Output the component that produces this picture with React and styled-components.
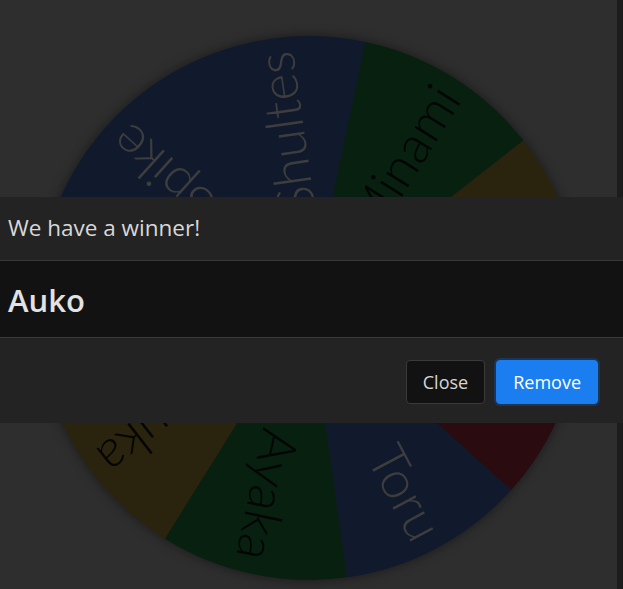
import React from 'react';
import styled, { createGlobalStyle } from 'styled-components';

const GlobalStyle = createGlobalStyle`
  html, body {
    margin: 0;
    padding: 0;
    height: 100%;
    overflow: hidden;
    background: #5c5c5c;
  }
  body {
    font-family: "Open Sans", "Noto Sans", sans-serif;
  }
`;

const Page = styled.div`
  display: flex;
  height: 100vh;
`;

const Stage = styled.main`
  flex: 1;
  display: flex;
  justify-content: center;
  padding-top: 36px;
`;

const Scrollbar = styled.div`
  width: 6px;
  background: #383838;
`;

const WheelSvg = styled.svg`
  display: block;
  filter: drop-shadow(0 0 6px rgba(0, 0, 0, 0.45));
`;

const Backdrop = styled.div`
  position: fixed;
  inset: 0;
  background: rgba(0, 0, 0, 0.5);
`;

const Dialog = styled.div`
  position: fixed;
  top: 197px;
  left: 0;
  right: 0;
  background: #232323;
  color: #dedede;
`;

const Header = styled.div`
  height: 64px;
  display: flex;
  align-items: center;
  padding: 0 8px 2px;
  border-bottom: 1px solid #393939;
  box-sizing: border-box;
`;

const Title = styled.h5`
  margin: 0;
  font-size: 22.5px;
  font-weight: 400;
  color: #d8d8d8;
`;

const Body = styled.div`
  height: 77px;
  display: flex;
  align-items: center;
  padding: 2px 8px 0;
  background: #121212;
  border-bottom: 1px solid #393939;
  box-sizing: border-box;
`;

const Winner = styled.h2`
  margin: 0;
  font-size: 31px;
  font-weight: 600;
  color: #e2e2e2;
`;

const Footer = styled.div`
  height: 85px;
  display: flex;
  align-items: center;
  justify-content: flex-end;
  gap: 11px;
  padding: 2px 25px 0 0;
  box-sizing: border-box;
`;

const Button = styled.button`
  height: 44px;
  padding: 0 16px;
  border-radius: 4px;
  font-family: inherit;
  font-size: 18px;
  cursor: pointer;
  border: 1px solid ${p => (p.$primary ? '#1a7ef0' : '#3a3a3a')};
  background: ${p => (p.$primary ? '#1a7ef0' : '#121212')};
  color: ${p => (p.$primary ? '#ffffff' : '#d6d6d6')};
  box-shadow: ${p => (p.$primary ? '0 0 0 2px #1d3554' : 'none')};
`;

const segments = [
  { name: 'Shultes', color: '#203458', text: '#7a7a7a' },
  { name: 'Minami', color: '#0e401e', text: '#0a0a0a' },
  { name: 'Auko', color: '#54461c', text: '#0a0a0a' },
  { name: 'Haruto', color: '#54161e', text: '#7a7a7a' },
  { name: 'Toru', color: '#203458', text: '#7a7a7a' },
  { name: 'Ayaka', color: '#0e401e', text: '#0a0a0a' },
  { name: 'Haruka', color: '#54461c', text: '#0a0a0a' },
  { name: 'Daichi', color: '#54161e', text: '#7a7a7a' },
  { name: 'Spike', color: '#203458', text: '#7a7a7a' },
];

const SIZE = 544;
const C = SIZE / 2;
const START = 242;

function point(deg, r) {
  const a = (deg * Math.PI) / 180;
  return [C + r * Math.cos(a), C + r * Math.sin(a)];
}

function Wheel() {
  const step = 360 / segments.length;
  return (
    <WheelSvg width={SIZE} height={SIZE} viewBox={`0 0 ${SIZE} ${SIZE}`}>
      {segments.map((s, i) => {
        const a0 = START + i * step;
        const a1 = a0 + step;
        const [x0, y0] = point(a0, C);
        const [x1, y1] = point(a1, C);
        return (
          <path
            key={s.name + 'p'}
            d={`M ${C} ${C} L ${x0} ${y0} A ${C} ${C} 0 0 1 ${x1} ${y1} Z`}
            fill={s.color}
          />
        );
      })}
      {segments.map((s, i) => {
        const mid = START + i * step + step / 2;
        return (
          <text
            key={s.name}
            x={C + 258}
            y={C}
            transform={`rotate(${mid} ${C} ${C})`}
            textAnchor="end"
            dominantBaseline="central"
            fill={s.text}
            fontFamily='Lato, "Open Sans", sans-serif'
            fontWeight="300"
            fontSize="52"
          >
            {s.name}
          </text>
        );
      })}
    </WheelSvg>
  );
}

export default function App() {
  return (
    <>
      <GlobalStyle />
      <Page>
        <Stage>
          <Wheel />
        </Stage>
        <Scrollbar />
      </Page>
      <Backdrop />
      <Dialog role="dialog">
        <Header>
          <Title>We have a winner!</Title>
        </Header>
        <Body>
          <Winner>Auko</Winner>
        </Body>
        <Footer>
          <Button>Close</Button>
          <Button $primary>Remove</Button>
        </Footer>
      </Dialog>
    </>
  );
}
